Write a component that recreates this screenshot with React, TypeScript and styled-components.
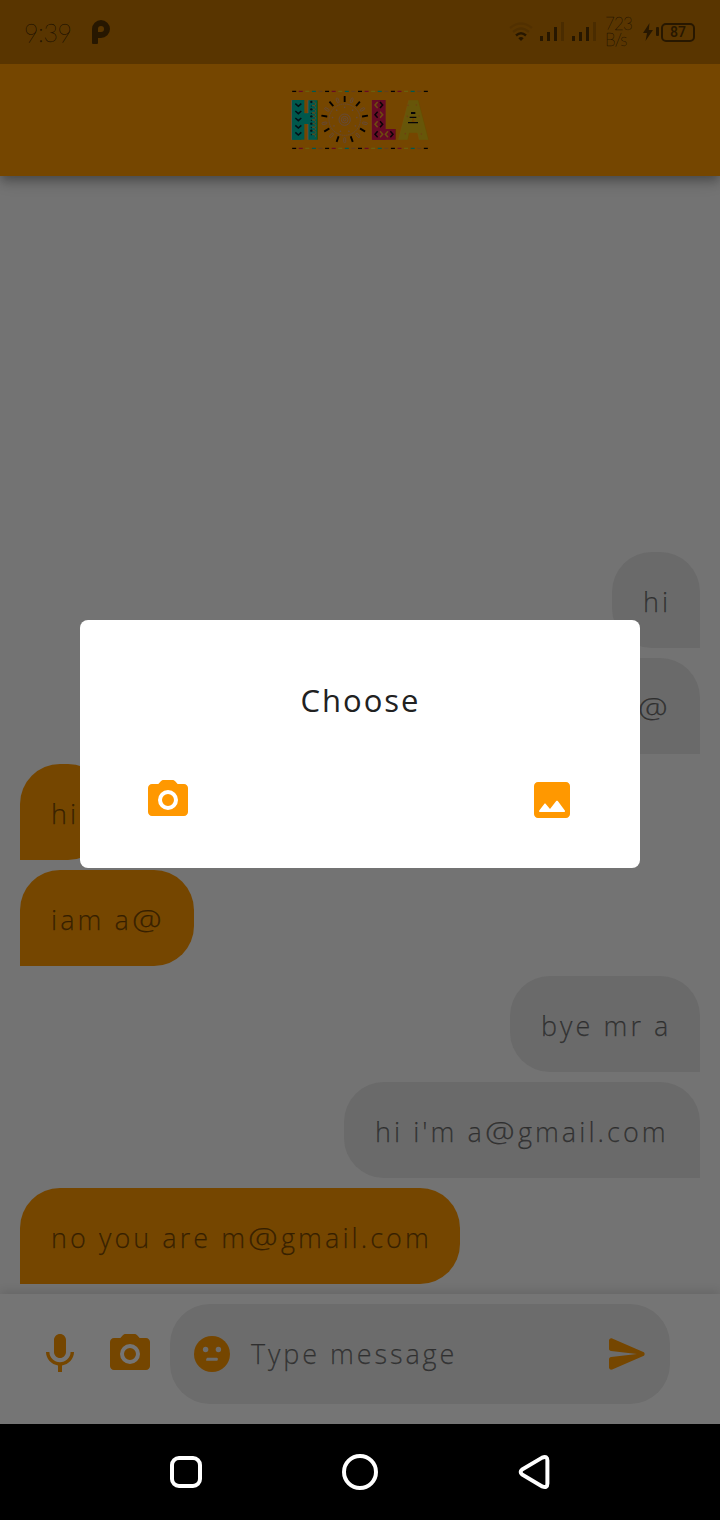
import React from "react";
import styled, { createGlobalStyle } from "styled-components";

const GlobalStyle = createGlobalStyle`
  body { margin: 0; background: #000; }
  * { box-sizing: border-box; }
`;

const ORANGE = "#ff9800";

const Phone = styled.div`
  width: 720px;
  height: 1520px;
  display: flex;
  flex-direction: column;
  overflow: hidden;
  font-family: "Open Sans", "Noto Sans", sans-serif;
`;

const Screen = styled.div`
  position: relative;
  height: 1424px;
  display: flex;
  flex-direction: column;
  background: #fafafa;
`;

const StatusBar = styled.header`
  height: 64px;
  flex: none;
  display: flex;
  justify-content: space-between;
  padding: 0 25px 0 24px;
  background: #c27400;
  color: rgba(0, 0, 0, 0.56);
  position: relative;
  z-index: 2;
`;

const StatusGroup = styled.div<{ $gap: number }>`
  display: flex;
  align-items: center;
  gap: ${(p) => p.$gap}px;
`;

const Clock = styled.span`
  width: 48px;
  font: 100 25px/62px Lato, sans-serif;
  -webkit-text-stroke: 0.35px;
  letter-spacing: -0.4px;
  white-space: nowrap;
`;

const CarrierGroup = styled.span`
  display: flex;
  gap: 8px;
  margin-left: 7px;
`;

const NetSpeed = styled.span`
  width: 27px;
  margin: 0 11px 0 9px;
  font: 100 17px/16px Lato, sans-serif;
  -webkit-text-stroke: 0.3px;
  letter-spacing: -0.9px;
  text-align: left;
`;

const BatteryLabel = styled.span`
  width: 34px;
  height: 19px;
  border: 2px solid;
  border-radius: 5px;
  text-align: center;
  font: 600 14px/15px Roboto, sans-serif;
`;

const AppBar = styled.div`
  height: 112px;
  flex: none;
  display: flex;
  align-items: center;
  justify-content: center;
  background: ${ORANGE};
  position: relative;
  z-index: 1;
  box-shadow: 0 4px 8px -2px rgba(0, 0, 0, 0.2), 0 8px 10px rgba(0, 0, 0, 0.14),
    0 2px 20px rgba(0, 0, 0, 0.12);
`;

const Messages = styled.main`
  flex: 1;
  display: flex;
  flex-direction: column;
  justify-content: flex-end;
  gap: 10px;
  padding: 0 20px 10px;
`;

const Bubble = styled.div<{ $mine: boolean; $width: number }>`
  align-self: ${(p) => (p.$mine ? "flex-end" : "flex-start")};
  width: ${(p) => p.$width}px;
  height: 96px;
  padding-left: 31px;
  border-radius: ${(p) => (p.$mine ? "40px 40px 0 40px" : "40px 40px 40px 0")};
  background: ${(p) => (p.$mine ? "#e6e6e6" : ORANGE)};
  color: rgba(0, 0, 0, 0.5);
  font-size: 27px;
  font-weight: 300;
  line-height: 99px;
  letter-spacing: 3.05px;
  -webkit-text-stroke: 0.25px;
  white-space: nowrap;
`;

const WideAt = styled.span`
  display: inline-block;
  margin-right: 6px;
  transform: scaleX(1.24);
  transform-origin: left center;
`;

const Composer = styled.footer`
  height: 130px;
  flex: none;
  display: flex;
  align-items: center;
  padding: 0 50px 10px 36px;
  background: #fff;
  color: ${ORANGE};
  position: relative;
  box-shadow: 0 -4px 8px rgba(0, 0, 0, 0.09);
  svg { flex: none; display: block; }
`;

const CameraSlot = styled.span`
  margin: 0 16px 0 22px;
`;

const InputPill = styled.div`
  flex: 1;
  height: 100px;
  display: flex;
  align-items: center;
  padding: 0 24px;
  border-radius: 40px;
  background: #ebebeb;
`;

const Placeholder = styled.span`
  flex: 1;
  margin-left: 21px;
  padding-bottom: 1px;
  color: rgba(0, 0, 0, 0.5);
  font-size: 27px;
  font-weight: 300;
  letter-spacing: 2.9px;
  -webkit-text-stroke: 0.25px;
  white-space: nowrap;
`;

const Scrim = styled.div`
  position: absolute;
  inset: 0;
  z-index: 5;
  padding-top: 620px;
  background: rgba(0, 0, 0, 0.54);
`;

const Dialog = styled.section`
  width: 560px;
  height: 248px;
  margin: 0 auto;
  padding: 55px 64px 44px;
  display: flex;
  flex-direction: column;
  justify-content: space-between;
  border-radius: 8px;
  background: #fff;
`;

const DialogTitle = styled.h1`
  margin: 0;
  padding-left: 1px;
  color: #212121;
  text-align: center;
  font-size: 31px;
  font-weight: 400;
  line-height: 50px;
  letter-spacing: 2px;
`;

const DialogActions = styled.div`
  display: flex;
  justify-content: space-between;
  color: ${ORANGE};
`;

const NavBar = styled.nav`
  height: 96px;
  background: #000;
  display: flex;
  align-items: center;
  justify-content: space-between;
  padding: 0 168px;
`;

function CameraIcon() {
  return (
    <svg width="48" height="48" viewBox="0 0 24 24" fill="currentColor" fillRule="evenodd">
      <path d="M9.88 2h4.24c.56 0 1.1.24 1.47.65L16.83 4H20c1.1 0 2 .9 2 2v12c0 1.1-.9 2-2 2H4c-1.1 0-2-.9-2-2V6c0-1.1.9-2 2-2h3.17l1.24-1.35C8.78 2.24 9.32 2 9.88 2zM12 7a5 5 0 1 0 0 10 5 5 0 1 0 0-10zM12 9a3 3 0 1 1 0 6 3 3 0 1 1 0-6z" />
    </svg>
  );
}

function ImageIcon() {
  return (
    <svg width="48" height="48" viewBox="0 0 24 24" fill="currentColor">
      <path d="M21 19V5c0-1.1-.9-2-2-2H5c-1.1 0-2 .9-2 2v14c0 1.1.9 2 2 2h14c1.1 0 2-.9 2-2zM8.9 13.98l2.1 2.53 3.1-3.99c.2-.26.6-.26.8.01l3.51 4.68c.25.33.01.8-.4.8H6.02c-.42 0-.65-.48-.39-.81L8.12 14c.19-.26.57-.27.78-.02z" />
    </svg>
  );
}

function Carrier() {
  return (
    <svg width="24" height="20" viewBox="0 0 24 20" fill="currentColor">
      <rect x="0" y="14" width="3" height="5" />
      <rect x="7" y="10" width="3" height="9" />
      <rect x="14" y="5" width="3" height="14" />
      <rect x="21" y="0" width="3" height="19" opacity=".3" />
    </svg>
  );
}

const dashes = ["#050505", "#e01a52", "#e8cf20", "#00bfb0", "#d98a3c"];

function HolaLogo() {
  const chevrons = [76, 98, 119, 141, 162];
  return (
    <svg width="140" height="64" viewBox="30 24 420 192">
      {[34, 205].map((y) =>
        Array.from({ length: 21 }, (_, i) => (
          <rect key={`${y}-${i}`} x={36.5 + i * 19.75} y={y - 1.7} width="12" height="3.8" fill={dashes[i % 5]} />
        ))
      )}
      <g fontFamily="DejaVu Sans" fontWeight="700" strokeWidth="11" fontSize="148">
        <text transform="translate(29.5 173.5) scale(.712 1)" fill="#00bfa8" stroke="#00bfa8">H</text>
        <text transform="translate(269.5 173.5) scale(.81 1)" fill="#e01a52" stroke="#e01a52">L</text>
        <text transform="translate(360 173.5) scale(.7 1)" fill="#e0bc14" stroke="#e0bc14">A</text>
      </g>
      {/* pattern bands */}
      <rect x="37" y="60" width="36" height="119" fill="#00bfa8" />
      <rect x="276" y="60" width="41" height="119" fill="#e01a52" />
      <g fill="none" strokeWidth="4.5">
        {chevrons.map((y) => (
          <g key={y}>
            <path d={`M46 ${y - 5}l9 8 9-8`} stroke="#0b2230" />
            <path d={`M97 ${y - 11}q14 2 9 10q-3 3-9 1q14 3 8 10`} stroke="#e8a030" strokeWidth="2.5" />
            <circle cx="94" cy={y - 10} r="3.5" fill="#0b2230" />
            <circle cx="94" cy={y + 2} r="1.8" fill="#0b2230" />
          </g>
        ))}
        {[75, 104, 133, 163].map((y, i) => (
          <g key={y}>
            <path d={`M293 ${y - 9}l-8 9 8 9`} stroke={i % 2 ? "#1a0810" : "#f0a820"} />
            <path d={`M300 ${y - 9}l8 9-8 9`} stroke={i % 2 ? "#f0a820" : "#1a0810"} />
          </g>
        ))}
        <path d="M324 154l-8 9 8 9" stroke="#f0a820" />
        <path d="M331 154l8 9-8 9" stroke="#1a0810" />
        <g stroke="#d9a080">
          <circle cx="194" cy="119" r="47" strokeWidth="2.6" strokeDasharray="5 1.5" />
          <circle cx="194" cy="119" r="17" strokeWidth="3" />
          <circle cx="194" cy="119" r="10" strokeWidth="3" />
          <circle cx="194" cy="119" r="4" strokeWidth="3" />
        </g>
      </g>
      {Array.from({ length: 18 }, (_, i) => (
        <g key={i} transform={`rotate(${i * 20} 194 119)`}>
          {i % 2 === 0 && <circle cx="194" cy="82" r="2.4" fill="#d9a080" />}
          {i % 2 === 0 ? (
            <rect x="191.2" y="48" width="5.6" height="18" rx="1" fill="#0a0500" />
          ) : (
            <rect x="191" y="50" width="6" height="15" rx="3" fill="none" stroke="#d9a080" strokeWidth="2.6" />
          )}
        </g>
      ))}
      <g stroke="#0b0b10" strokeWidth="3.5">
        <path d="M393 99h13" strokeWidth="6" />
        <path d="M389 112h20M384 128h30" />
      </g>
      <g fill="#f08a28">
        <circle cx="384" cy="76" r="2.5" />
        <circle cx="409" cy="75" r="2.5" />
        <circle cx="382" cy="109" r="2.5" />
        <circle cx="417" cy="108" r="2.5" />
        <circle cx="376" cy="161" r="2.5" />
        <circle cx="424" cy="162" r="2.5" />
      </g>
    </svg>
  );
}

const messages = [
  { mine: true, text: "hi", width: 88 },
  { mine: true, text: "iam m@", width: 183 },
  { mine: false, text: "hi", width: 88 },
  { mine: false, text: "iam a@", width: 174 },
  { mine: true, text: "bye mr a", width: 190 },
  { mine: true, text: "hi i'm a@gmail.com", width: 356 },
  { mine: false, text: "no you are m@gmail.com", width: 440 },
];

function MessageText({ text }: { text: string }) {
  const [before, after] = text.split("@");
  if (after === undefined) return <>{text}</>;
  return (
    <>
      {before}
      <WideAt>@</WideAt>
      {after}
    </>
  );
}

export default function App() {
  return (
    <Phone>
      <GlobalStyle />
      <Screen>
        <StatusBar>
          <StatusGroup $gap={20}>
            <Clock>9:39</Clock>
            <svg width="18" height="24" viewBox="0 0 18 24" fill="currentColor" fillRule="evenodd">
              <path d="M9 0A9 9 0 1 1 9 18H6V23Q6 24 5 24H1Q0 24 0 23V9A9 9 0 0 1 9 0ZM9 6Q6 6 6 9V12H9A3 3 0 0 0 9 6Z" />
            </svg>
          </StatusGroup>
          <StatusGroup $gap={0}>
            <svg width="24" height="20" viewBox="0 0 24 20" fill="none" stroke="currentColor" strokeWidth="2.4">
              <path d="M1 6Q12-3 23 6" opacity=".14" />
              <path d="M4 10Q12 3 20 10" opacity=".2" />
              <path d="M7 13.5Q12 9 17 13.5" />
              <path d="M9.3 16.2Q12 14 14.7 16.2L12 19Z" fill="currentColor" stroke="none" />
            </svg>
            <CarrierGroup>
              <Carrier />
              <Carrier />
            </CarrierGroup>
            <NetSpeed>723 B/s</NetSpeed>
            <svg width="18" height="18" viewBox="0 0 18 18" fill="currentColor">
              <path d="M6.5 0L0 10h4l-1.5 8L10 7H5.8z" />
              <rect x="13" y="4" width="3" height="9" rx="1" />
            </svg>
            <BatteryLabel>87</BatteryLabel>
          </StatusGroup>
        </StatusBar>
        <AppBar>
          <HolaLogo />
        </AppBar>
        <Messages>
          {messages.map((m, i) => (
            <Bubble key={i} $mine={m.mine} $width={m.width}>
              <MessageText text={m.text} />
            </Bubble>
          ))}
        </Messages>
        <Composer>
          <svg width="48" height="48" viewBox="0 0 24 24" fill="currentColor">
            <path d="M12 14c1.66 0 2.99-1.34 2.99-3L15 5c0-1.66-1.34-3-3-3S9 3.34 9 5v6c0 1.66 1.34 3 3 3zm5.3-3c0 3-2.54 5.1-5.3 5.1S6.7 14 6.7 11H5c0 3.41 2.72 6.23 6 6.72V21h2v-3.28c3.28-.48 6-3.3 6-6.72h-1.7z" />
          </svg>
          <CameraSlot>
            <CameraIcon />
          </CameraSlot>
          <InputPill>
            <svg width="36" height="36" viewBox="0 0 36 36">
              <circle cx="18" cy="18" r="18" fill="currentColor" />
              <g fill="#ebebeb">
                <circle cx="11.6" cy="13.5" r="2.7" />
                <circle cx="24.4" cy="13.5" r="2.7" />
                <path d="M13.3 21.8h9.6q1.2 0 1 1.5t-1.2 1.5H12.4q-.6-.2-.2-1.5t1.1-1.5z" />
              </g>
            </svg>
            <Placeholder>Type message</Placeholder>
            <svg width="37" height="32" viewBox="0 0 37 32" fill="currentColor">
              <path d="M3.2.4L34.3 14C36.1 14.8 36.1 17.2 34.3 18L3.2 31.6C1.5 32.2 0 31 0 29.5V21.3C0 20 .9 19.1 2.1 19L28 16 2.1 13C.9 12.9 0 12 0 10.7V2.5C0 1 1.5-.2 3.2.4Z" />
            </svg>
          </InputPill>
        </Composer>
        <Scrim>
          <Dialog>
            <DialogTitle>Choose</DialogTitle>
            <DialogActions>
              <CameraIcon />
              <ImageIcon />
            </DialogActions>
          </Dialog>
        </Scrim>
      </Screen>
      <NavBar>
        <svg width="36" height="36" viewBox="0 0 36 36" fill="none" stroke="#fff" strokeWidth="4">
          <rect x="4" y="4" width="28" height="28" rx="7" />
        </svg>
        <svg width="36" height="36" viewBox="0 0 36 36" fill="none" stroke="#fff" strokeWidth="4">
          <circle cx="18" cy="18" r="16" />
        </svg>
        <svg width="36" height="36" viewBox="0 0 36 36" fill="none" stroke="#fff" strokeWidth="4">
          <path d="M26.2 3.6L6 15.6Q3.4 18 6 20.4L26.2 32.4Q31.4 34.5 31.4 29.5V6.5Q31.4 1.5 26.2 3.6Z" />
        </svg>
      </NavBar>
    </Phone>
  );
}
